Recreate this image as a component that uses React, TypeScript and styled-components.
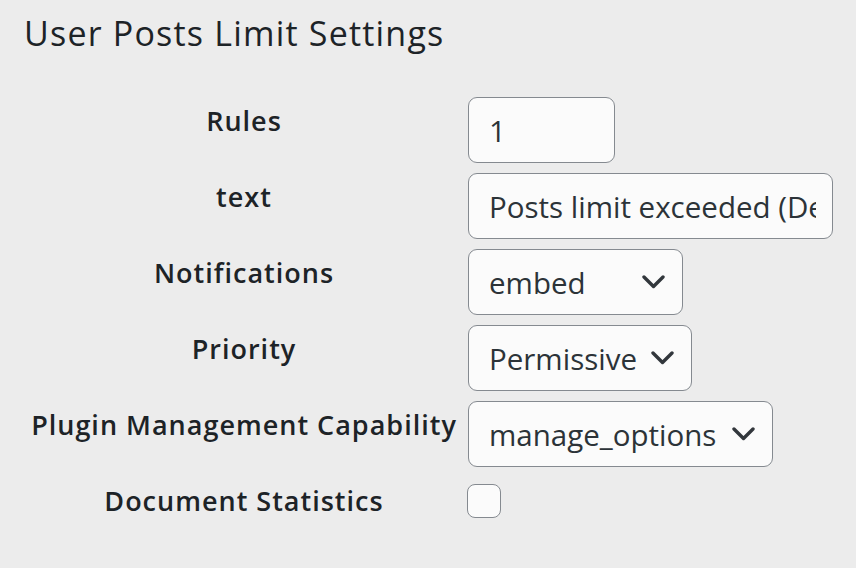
import React from "react";
import styled, { createGlobalStyle } from "styled-components";

const GlobalStyle = createGlobalStyle`
  html, body {
    margin: 0;
    padding: 0;
    background-color: #ececec;
  }
  body {
    font-family: "Open Sans", "Noto Sans", "Liberation Sans", sans-serif;
    color: #1d2327;
  }
`;

const Page = styled("div")`
  width: 856px;
  height: 568px;
  box-sizing: border-box;
  padding: 10px 0 0 24px;
  overflow: hidden;
`;

const Heading = styled("h1")`
  margin: 0 0 41px;
  font-size: 34px;
  line-height: 46px;
  letter-spacing: 1.2px;
  font-weight: 400;
  color: #1d2327;
`;

const FormTable = styled("div")`
  display: grid;
  grid-template-columns: 428px auto;
  column-gap: 10px;
  row-gap: 10px;
  margin-left: 6px;
  align-items: start;
`;

const Label = styled("div")`
  height: 66px;
  box-sizing: border-box;
  padding-top: 4px;
  text-align: center;
  font-size: 27px;
  line-height: 40px;
  letter-spacing: 1px;
  font-weight: 600;
  color: #1d2327;
  white-space: nowrap;
`;

const Field = styled("div")`
  display: flex;
  align-items: center;
  min-height: 66px;
`;

const TextInput = styled("input")<{ $width: number }>`
  width: ${(p) => p.$width}px;
  height: 66px;
  box-sizing: border-box;
  padding: 0 16px 0 20px;
  border: 1.5px solid #858a90;
  border-radius: 9px;
  background-color: #fbfbfb;
  font-family: "Open Sans", "Noto Sans", "Liberation Sans", sans-serif;
  font-size: 29.5px;
  color: #2c3338;
  outline: none;
`;

const SelectBox = styled("div")<{ $width: number }>`
  width: ${(p) => p.$width}px;
  height: 66px;
  box-sizing: border-box;
  padding: 0 17px 0 20px;
  border: 1.5px solid #858a90;
  border-radius: 9px;
  background-color: #fbfbfb;
  display: flex;
  align-items: center;
  justify-content: space-between;
  font-size: 29.5px;
  color: #2c3338;
`;

const Chevron = styled("svg")`
  width: 23px;
  height: 14px;
  flex-shrink: 0;
`;

const CheckBox = styled("span")`
  display: block;
  align-self: flex-start;
  width: 34px;
  height: 34px;
  box-sizing: border-box;
  margin: 7px 0 0 -1px;
  border: 1.5px solid #858a90;
  border-radius: 8px;
  background-color: #fbfbfb;
`;

const Select: React.FC<{ value: string; width: number }> = ({ value, width }) => (
  <SelectBox $width={width}>
    <span>{value}</span>
    <Chevron viewBox="0 0 23 14">
      <path d="M2 2 L11.5 11.5 L21 2" fill="none" stroke="#32373c" strokeWidth="3.4" strokeLinecap="round" strokeLinejoin="round" />
    </Chevron>
  </SelectBox>
);

export default function App() {
  return (
    <>
      <GlobalStyle />
      <Page>
        <Heading>User Posts Limit Settings</Heading>
        <FormTable>
          <Label>Rules</Label>
          <Field>
            <TextInput $width={147} defaultValue="1" />
          </Field>

          <Label>text</Label>
          <Field>
            <TextInput $width={365} defaultValue="Posts limit exceeded (Default)" />
          </Field>

          <Label>Notifications</Label>
          <Field>
            <Select value="embed" width={215} />
          </Field>

          <Label>Priority</Label>
          <Field>
            <Select value="Permissive" width={224} />
          </Field>

          <Label>Plugin Management Capability</Label>
          <Field>
            <Select value="manage_options" width={305} />
          </Field>

          <Label>Document Statistics</Label>
          <Field>
            <CheckBox />
          </Field>
        </FormTable>
      </Page>
    </>
  );
}
